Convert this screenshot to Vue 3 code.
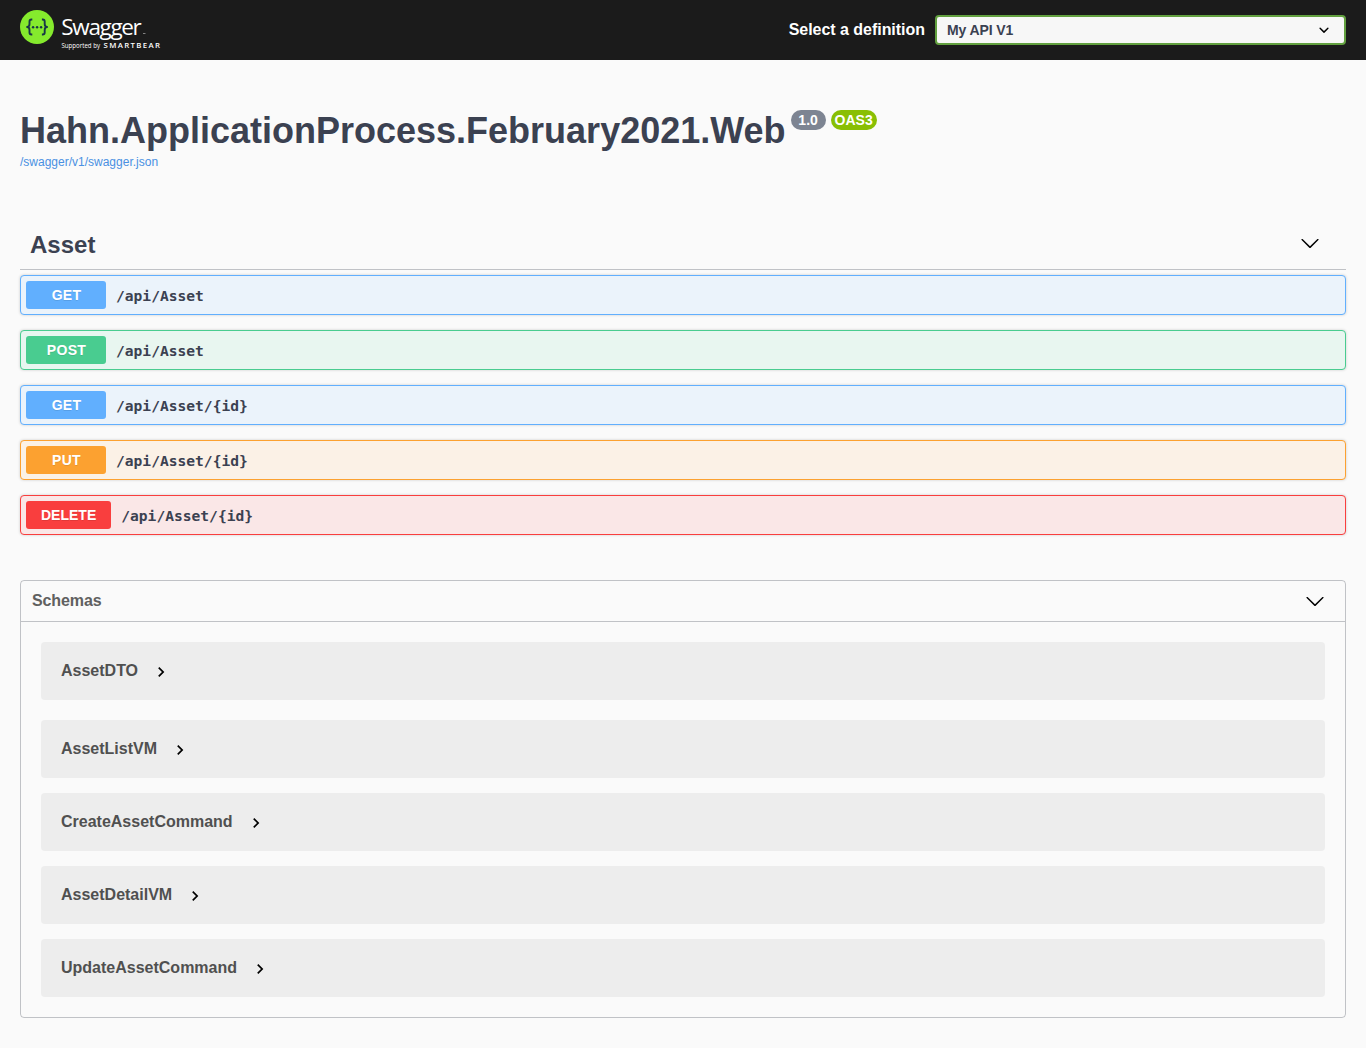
<script setup>
const operations = [
  { method: 'get', path: '/api/Asset' },
  { method: 'post', path: '/api/Asset' },
  { method: 'get', path: '/api/Asset/{id}' },
  { method: 'put', path: '/api/Asset/{id}' },
  { method: 'delete', path: '/api/Asset/{id}' },
]
const schemas = ['AssetDTO', 'AssetListVM', 'CreateAssetCommand', 'AssetDetailVM', 'UpdateAssetCommand']
const largeArrow =
  'M17.418 6.109c.272-.268.709-.268.979 0s.271.701 0 .969l-7.908 7.83c-.27.268-.707.268-.979 0l-7.908-7.83c-.27-.268-.27-.701 0-.969.271-.268.709-.268.979 0L10 13.25l7.418-7.141z'
</script>

<template>
  <header class="topbar">
    <svg class="logo" width="144" height="44" viewBox="0 0 144 44">
      <circle cx="17" cy="17" r="17" fill="#85ea2d" />
      <g fill="none" stroke="#173647" stroke-width="1.9" stroke-linejoin="round">
        <path d="M12.300 9.500h-.8q-2 0-2 2v2.600q0 2.800-2.400 2.900q2.400.1 2.400 2.900v2.600q0 2 2 2h.8" />
        <path d="M21.900 9.500h.8q2 0 2 2v2.600q0 2.800 2.400 2.900q-2.400.1-2.400 2.900v2.600q0 2-2 2h-.8" />
      </g>
      <g fill="#173647">
        <circle cx="13.100" cy="17.200" r="1.200" />
        <circle cx="17.100" cy="17.200" r="1.200" />
        <circle cx="21.100" cy="17.200" r="1.200" />
      </g>
      <g fill="#fff">
        <text class="word" x="41.300" y="24.500" textLength="80.500" lengthAdjust="spacing">Swagger</text>
        <rect x="123" y="23" width="2.500" height="1" opacity=".45" />
        <text class="by" x="41.500" y="38" textLength="38.500" lengthAdjust="spacingAndGlyphs">Supported by</text>
        <text class="brand" x="83.500" y="38" textLength="56.500">SMARTBEAR</text>
      </g>
    </svg>
    <div class="definition">
      <span class="definition-label">Select a definition</span>
      <div class="select">
        <span>My API V1</span>
        <svg width="20" height="20" viewBox="0 0 20 20">
          <path d="M13.418 7.859a.695.695 0 01.978 0 .68.68 0 010 .969l-3.908 3.83a.697.697 0 01-.979 0l-3.908-3.83a.68.68 0 010-.969.695.695 0 01.978 0L10 11l3.418-3.141z" />
        </svg>
      </div>
    </div>
  </header>

  <main class="wrapper">
    <section class="info">
      <h1>Hahn.ApplicationProcess.February2021.Web</h1>
      <span class="badge">1.0</span>
      <span class="badge oas">OAS3</span>
    </section>
    <a class="link">/swagger/v1/swagger.json</a>

    <section>
      <div class="tag">
        <h2>Asset</h2>
        <svg width="20" height="20" viewBox="0 0 20 20"><path :d="largeArrow" /></svg>
      </div>
      <div class="operations">
        <div v-for="(op, i) in operations" :key="i" class="op" :class="op.method">
          <span class="method">{{ op.method.toUpperCase() }}</span>
          <span class="path">{{ op.path }}</span>
        </div>
      </div>
    </section>

    <section class="models">
      <div class="models-head">
        <h3>Schemas</h3>
        <svg width="20" height="20" viewBox="0 0 20 20"><path :d="largeArrow" /></svg>
      </div>
      <div class="models-body">
        <div v-for="name in schemas" :key="name" class="model">
          <span>{{ name }}</span>
          <svg width="20" height="20" viewBox="0 0 24 24">
            <path d="M10 6L8.590 7.410 13.170 12l-4.580 4.590L10 18l6-6z" />
          </svg>
        </div>
      </div>
    </section>
  </main>
</template>

<style>
body {
  background: #fafafa;
  font-family: "Liberation Sans", Arial, sans-serif;
  color: #3b4151;
}
</style>

<style scoped>
h1, h2, h3 {
  margin: 0;
}
.topbar {
  box-sizing: border-box;
  display: flex;
  justify-content: space-between;
  height: 60px;
  padding: 10px 20px 0;
  background: #1b1b1b;
}
.logo {
  overflow: visible;
}
.word {
  font: 400 22.500px "Open Sans", sans-serif;
}
.by {
  font: 400 6.200px "Open Sans", sans-serif;
}
.brand {
  font: 600 7.800px "Open Sans", sans-serif;
}
.definition {
  display: flex;
  align-items: center;
  height: 40px;
}
.definition-label {
  margin-right: 10px;
  color: #fff;
  font-size: 16px;
  font-weight: 700;
  letter-spacing: -.03px;
  line-height: 18px;
}
.select {
  box-sizing: border-box;
  display: flex;
  align-items: center;
  justify-content: space-between;
  width: 411px;
  height: 30px;
  padding: 0 10px;
  border: 2px solid #62a03f;
  border-radius: 4px;
  background: #f7f7f7;
  font-size: 14px;
  font-weight: 700;
  letter-spacing: -.1px;
}
.wrapper {
  padding: 0 20px;
}
.info {
  display: flex;
  align-items: flex-start;
  padding-top: 50px;
}
.info h1 {
  margin-right: 5px;
  font-size: 36px;
  line-height: 41px;
}
.badge {
  height: 20px;
  margin-right: 5px;
  padding: 0 7.750px;
  border-radius: 20px;
  background: #7d8492;
  color: #fff;
  font-size: 14px;
  font-weight: 700;
  line-height: 21px;
}
.oas {
  padding: 0 4px;
  background: #89bf04;
}
.link {
  display: block;
  height: 18px;
  margin-top: 2px;
  color: #4990e2;
  font-size: 12px;
  line-height: 18px;
}
.tag {
  box-sizing: border-box;
  display: flex;
  align-items: center;
  justify-content: space-between;
  height: 50px;
  margin-top: 49px;
  padding: 0 26px 0 10px;
  border-bottom: 1px solid rgba(59, 65, 81, .3);
}
.tag h2 {
  font-size: 24px;
  line-height: 28px;
}
.tag svg {
  margin-bottom: 3px;
}
.operations {
  display: flex;
  flex-direction: column;
  gap: 15px;
  margin-top: 5px;
}
.op {
  box-sizing: border-box;
  display: flex;
  align-items: center;
  height: 40px;
  padding: 5px;
  border: 1px solid var(--tone);
  border-radius: 4px;
  background: var(--tint);
  box-shadow: 0 0 3px rgba(0, 0, 0, .19);
}
.get {
  --tone: #61affe;
  --tint: #ebf3fb;
}
.post {
  --tone: #49cc90;
  --tint: #e8f6f0;
}
.put {
  --tone: #fca130;
  --tint: #fbf1e6;
}
.delete {
  --tone: #f93e3e;
  --tint: #fae7e7;
}
.method {
  box-sizing: border-box;
  min-width: 80px;
  height: 28px;
  padding: 0 15px;
  border-radius: 3px;
  background: var(--tone);
  color: #fff;
  font-size: 14px;
  font-weight: 700;
  line-height: 28px;
  text-align: center;
  text-shadow: 0 1px 0 rgba(0, 0, 0, .1);
}
.get .method,
.post .method,
.put .method {
  padding-left: 16px;
  letter-spacing: .3px;
}
.path {
  padding: 2px 10px 0;
  font-family: "DejaVu Sans Mono", monospace;
  font-size: 14.600px;
  font-weight: 700;
  line-height: 20px;
}
.models {
  margin-top: 45px;
  border: 1px solid rgba(59, 65, 81, .3);
  border-radius: 4px;
}
.models-head {
  box-sizing: border-box;
  display: flex;
  align-items: center;
  justify-content: space-between;
  height: 41px;
  padding: 0 20px 0 11px;
  border-bottom: 1px solid rgba(59, 65, 81, .3);
}
.models-head h3 {
  margin-bottom: 1px;
  color: #606060;
  font-size: 16px;
  letter-spacing: -.1px;
  line-height: 18px;
}
.models-body {
  display: flex;
  flex-direction: column;
  gap: 15px;
  padding: 20px;
}
.model {
  box-sizing: border-box;
  display: flex;
  align-items: center;
  gap: 13px;
  height: 58px;
  padding: 0 20px;
  border-radius: 4px;
  background: #ededed;
  color: #505050;
  font-size: 16px;
  font-weight: 700;
}
.model:first-child {
  margin-bottom: 5px;
}
.model span {
  margin-bottom: 1px;
  line-height: 18px;
}
.model svg {
  margin-top: 2px;
}
</style>
